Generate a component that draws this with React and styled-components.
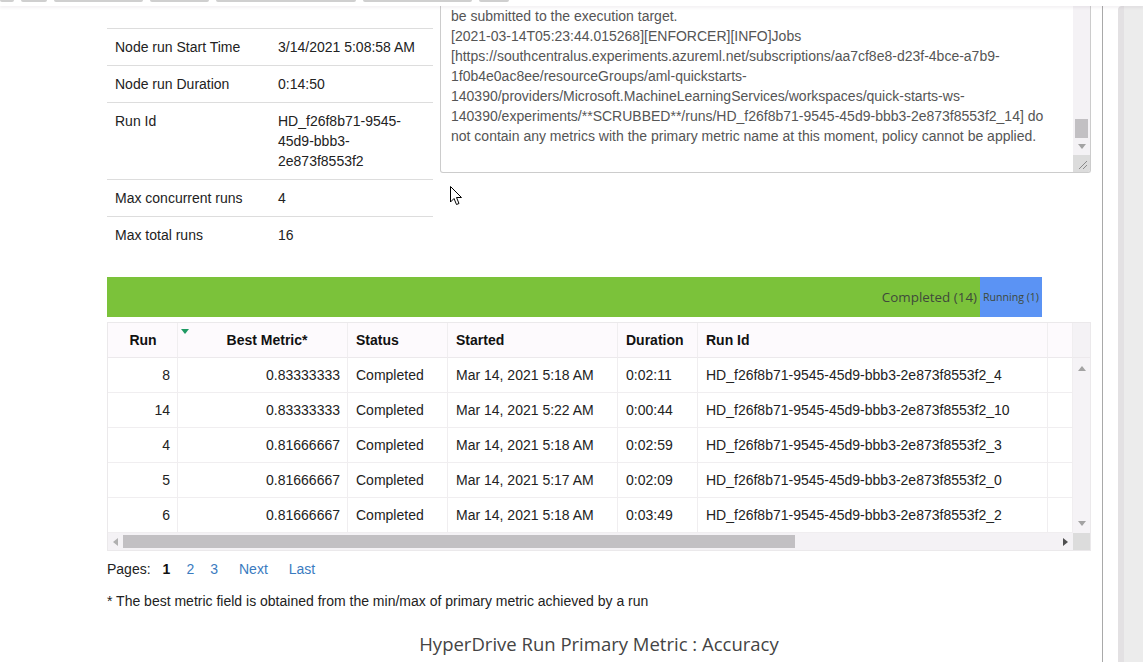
import React from 'react'
import styled, { createGlobalStyle } from 'styled-components'

const GlobalStyle = createGlobalStyle`
  html, body {
    margin: 0;
    padding: 0;
    background: #ffffff;
    overflow: hidden;
  }
  body {
    font-family: "Liberation Sans", Arial, sans-serif;
    font-size: 14px;
    color: #222222;
  }
`

const details = [
  { label: 'Node run Start Time', value: '3/14/2021 5:08:58 AM' },
  { label: 'Node run Duration', value: '0:14:50' },
  { label: 'Run Id', value: ['HD_f26f8b71-9545-', '45d9-bbb3-', '2e873f8553f2'] },
  { label: 'Max concurrent runs', value: '4' },
  { label: 'Max total runs', value: '16' },
]

const logLines = [
  'be submitted to the execution target.',
  '[2021-03-14T05:23:44.015268][ENFORCER][INFO]Jobs',
  '[https://southcentralus.experiments.azureml.net/subscriptions/aa7cf8e8-d23f-4bce-a7b9-',
  '1f0b4e0ac8ee/resourceGroups/aml-quickstarts-',
  '140390/providers/Microsoft.MachineLearningServices/workspaces/quick-starts-ws-',
  '140390/experiments/**SCRUBBED**/runs/HD_f26f8b71-9545-45d9-bbb3-2e873f8553f2_14] do',
  'not contain any metrics with the primary metric name at this moment, policy cannot be applied.',
]

const runs = [
  ['8', '0.83333333', 'Completed', 'Mar 14, 2021 5:18 AM', '0:02:11', 'HD_f26f8b71-9545-45d9-bbb3-2e873f8553f2_4'],
  ['14', '0.83333333', 'Completed', 'Mar 14, 2021 5:22 AM', '0:00:44', 'HD_f26f8b71-9545-45d9-bbb3-2e873f8553f2_10'],
  ['4', '0.81666667', 'Completed', 'Mar 14, 2021 5:18 AM', '0:02:59', 'HD_f26f8b71-9545-45d9-bbb3-2e873f8553f2_3'],
  ['5', '0.81666667', 'Completed', 'Mar 14, 2021 5:17 AM', '0:02:09', 'HD_f26f8b71-9545-45d9-bbb3-2e873f8553f2_0'],
  ['6', '0.81666667', 'Completed', 'Mar 14, 2021 5:18 AM', '0:03:49', 'HD_f26f8b71-9545-45d9-bbb3-2e873f8553f2_2'],
]

const tabWidths = [14, 26, 89, 59, 140, 109, 30]

function Arrow({ dir, color = '#a3a3a3' }) {
  const points = {
    up: '0,5 4,0 8,5',
    down: '0,0 8,0 4,5',
    left: '5,0 5,8 0,4',
    right: '0,0 0,8 5,4',
  }[dir]
  const vertical = dir === 'up' || dir === 'down'
  return (
    <svg width={vertical ? 8 : 5} height={vertical ? 5 : 8}>
      <polygon points={points} fill={color} />
    </svg>
  )
}

export default function App() {
  return (
    <Page>
      <GlobalStyle />
      <TopBar>
        {tabWidths.map((w, i) => (
          <TabStub key={i} style={{ width: w }} />
        ))}
      </TopBar>
      <Frame>
        <Main>
          <TopSection>
            <DetailsTable>
              {details.map((d) => (
                <DetailRow key={d.label}>
                  <DetailLabel>{d.label}</DetailLabel>
                  <DetailValue>
                    {Array.isArray(d.value)
                      ? d.value.map((v) => <div key={v}>{v}</div>)
                      : d.value}
                  </DetailValue>
                </DetailRow>
              ))}
            </DetailsTable>
            <LogBox>
              <LogText>
                {logLines.map((l, i) => (
                  <LogLine key={i}>{l}</LogLine>
                ))}
              </LogText>
              <LogScroll>
                <ScrollTrack>
                  <LogThumb />
                  <ArrowSlot>
                    <Arrow dir="down" />
                  </ArrowSlot>
                </ScrollTrack>
                <ResizeCorner>
                  <svg width="10" height="10">
                    <line x1="1" y1="9" x2="9" y2="1" stroke="#8a8a8a" />
                    <line x1="5" y1="9" x2="9" y2="5" stroke="#8a8a8a" />
                  </svg>
                </ResizeCorner>
              </LogScroll>
            </LogBox>
          </TopSection>

          <StatusBar>
            <StatusSegment $color="#7bc23a" $grow>
              <StatusLabel $size={13.4}>Completed (14)</StatusLabel>
            </StatusSegment>
            <StatusSegment $color="#5b93f4" $width={62}>
              <StatusLabel $size={10.6}>Running (1)</StatusLabel>
            </StatusSegment>
          </StatusBar>

          <DataTable>
            <TableUpper>
              <Grid>
                <HeadCell $align="center">Run</HeadCell>
                <HeadCell $align="center" $sorted>
                  <SortMark>
                    <Arrow dir="down" color="#1f9a63" />
                  </SortMark>
                  Best Metric*
                </HeadCell>
                <HeadCell>Status</HeadCell>
                <HeadCell>Started</HeadCell>
                <HeadCell>Duration</HeadCell>
                <HeadCell>Run Id</HeadCell>
                <HeadCell />
                {runs.map((r) => (
                  <React.Fragment key={r[5]}>
                    <Cell $align="right">{r[0]}</Cell>
                    <Cell $align="right">{r[1]}</Cell>
                    <Cell>{r[2]}</Cell>
                    <Cell>{r[3]}</Cell>
                    <Cell>{r[4]}</Cell>
                    <Cell>{r[5]}</Cell>
                    <Cell />
                  </React.Fragment>
                ))}
              </Grid>
              <TableVScroll>
                <VScrollHead />
                <VScrollBody>
                  <Arrow dir="up" />
                  <Arrow dir="down" />
                </VScrollBody>
              </TableVScroll>
            </TableUpper>
            <HScroll>
              <HTrack>
                <ArrowSlotH>
                  <Arrow dir="left" color="#b0b0b0" />
                </ArrowSlotH>
                <HThumb />
                <Spacer />
                <ArrowSlotH>
                  <Arrow dir="right" color="#505050" />
                </ArrowSlotH>
              </HTrack>
              <Corner />
            </HScroll>
          </DataTable>

          <Pager>
            <span>Pages:</span>
            <PageItem $current>1</PageItem>
            <PageItem>2</PageItem>
            <PageItem>3</PageItem>
            <PageItem $wide>Next</PageItem>
            <PageItem $wide>Last</PageItem>
          </Pager>

          <Footnote>
            * The best metric field is obtained from the min/max of primary metric achieved by a run
          </Footnote>

          <ChartTitle>HyperDrive Run Primary Metric : Accuracy</ChartTitle>
        </Main>
        <Divider />
        <Gap />
        <Gutter />
      </Frame>

      <Cursor width="13" height="20" viewBox="0 0 13 20">
        <path
          d="M0.5 0.5 L0.5 16 L4 12.5 L6.5 18.5 L9 17.5 L6.5 11.5 L11.5 11.5 Z"
          fill="#ffffff"
          stroke="#000000"
          strokeWidth="1"
          strokeLinejoin="round"
        />
      </Cursor>
    </Page>
  )
}

const Page = styled.div`
  position: relative;
  width: 1143px;
  height: 662px;
  display: flex;
  flex-direction: column;
  overflow: hidden;
`

const TopBar = styled.div`
  height: 6px;
  flex-shrink: 0;
  display: flex;
  gap: 7px;
  align-items: flex-start;
  background: #ffffff;
  box-shadow: 0 2px 3px rgba(80, 60, 80, 0.07);
  position: relative;
  z-index: 2;
`

const TabStub = styled.div`
  height: 2px;
  background: #cfcfcf;
  border-radius: 0 0 2px 2px;
`

const Frame = styled.div`
  flex: 1;
  display: flex;
  min-height: 0;
`

const Main = styled.div`
  width: 984px;
  padding: 0 11px 0 107px;
  display: flex;
  flex-direction: column;
  overflow: hidden;
`

const TopSection = styled.div`
  display: grid;
  grid-template-columns: 326px 651px;
  column-gap: 7px;
  align-items: start;
`

const DetailsTable = styled.div`
  margin-top: 22px;
  display: flex;
  flex-direction: column;
`

const DetailRow = styled.div`
  display: grid;
  grid-template-columns: 163px 1fr;
  border-top: 1px solid #dddddd;
  padding: 8px 8px;
  line-height: 20px;
  color: #222222;
`

const DetailLabel = styled.div``

const DetailValue = styled.div``

const LogBox = styled.div`
  height: 166px;
  border: 1px solid #cccccc;
  border-top: none;
  border-radius: 0 0 3px 3px;
  display: flex;
  overflow: hidden;
`

const LogText = styled.div`
  flex: 1;
  padding: 0 10px;
  color: #555555;
  line-height: 20px;
  overflow: hidden;
`

const LogLine = styled.div`
  white-space: nowrap;
`

const LogScroll = styled.div`
  width: 17px;
  display: flex;
  flex-direction: column;
`

const ScrollTrack = styled.div`
  flex: 1;
  background: #f4f2f5;
  display: flex;
  flex-direction: column;
  align-items: center;
  justify-content: flex-end;
`

const LogThumb = styled.div`
  width: 13px;
  height: 19px;
  background: #c2c0c3;
`

const ArrowSlot = styled.div`
  height: 17px;
  display: flex;
  align-items: center;
  justify-content: center;
`

const ResizeCorner = styled.div`
  height: 17px;
  background: #dcdcdc;
  display: flex;
  align-items: flex-end;
  justify-content: flex-end;
  padding: 0 2px 2px 0;
  box-sizing: border-box;
`

const StatusBar = styled.div`
  margin-top: 24px;
  width: 935px;
  height: 40px;
  display: flex;
  flex-shrink: 0;
`

const StatusSegment = styled.div`
  background: ${(p) => p.$color};
  flex: ${(p) => (p.$grow ? '1 1 auto' : '0 0 auto')};
  width: ${(p) => (p.$width ? `${p.$width}px` : 'auto')};
  box-sizing: border-box;
  display: flex;
  align-items: center;
  justify-content: flex-end;
  padding-right: 3px;
  overflow: hidden;
`

const StatusLabel = styled.span`
  font-family: "Open Sans", "DejaVu Sans", sans-serif;
  font-size: ${(p) => p.$size}px;
  color: #3f4a3a;
  white-space: nowrap;
`

const DataTable = styled.div`
  margin-top: 5px;
  width: 982px;
  border: 1px solid #ebe9eb;
  display: flex;
  flex-direction: column;
  flex-shrink: 0;
`

const TableUpper = styled.div`
  display: flex;
`

const Grid = styled.div`
  flex: 1;
  display: grid;
  grid-template-columns: 70px 170px 100px 170px 80px 350px 1fr;
  grid-auto-rows: 35px;
`

const Cell = styled.div`
  position: relative;
  display: flex;
  align-items: center;
  justify-content: ${(p) =>
    p.$align === 'right' ? 'flex-end' : p.$align === 'center' ? 'center' : 'flex-start'};
  padding: 0 7px 0 8px;
  border-right: 1px solid #f0eef0;
  border-bottom: 1px solid #f0eef0;
  white-space: nowrap;
  color: #222222;
  background: #ffffff;
`

const HeadCell = styled(Cell)`
  background: #fdfafd;
  font-weight: bold;
  color: #111111;
  border-bottom-color: #ece9ec;
  padding-left: ${(p) => (p.$sorted ? '16px' : '8px')};
`

const SortMark = styled.span`
  position: absolute;
  left: 3px;
  top: 6px;
  display: flex;
`

const TableVScroll = styled.div`
  width: 17px;
  display: flex;
  flex-direction: column;
  background: #f5f3f6;
`

const VScrollHead = styled.div`
  height: 34px;
  background: #f4f2f5;
  border-bottom: 1px solid #ece9ec;
`

const VScrollBody = styled.div`
  flex: 1;
  display: flex;
  flex-direction: column;
  align-items: center;
  justify-content: space-between;
  padding: 8px 0 7px;
`

const HScroll = styled.div`
  height: 17px;
  display: flex;
`

const HTrack = styled.div`
  flex: 1;
  background: #f4f2f5;
  display: flex;
  align-items: center;
`

const ArrowSlotH = styled.div`
  width: 15px;
  display: flex;
  justify-content: center;
`

const HThumb = styled.div`
  width: 672px;
  height: 13px;
  background: #c2c0c3;
`

const Spacer = styled.div`
  flex: 1;
`

const Corner = styled.div`
  width: 17px;
  background: #dcdcdc;
`

const Pager = styled.div`
  margin-top: 8px;
  line-height: 20px;
  display: flex;
  color: #222222;
  span:first-child {
    margin-right: 4px;
  }
`

const PageItem = styled.span`
  padding: 0 8px;
  margin-left: ${(p) => (p.$wide ? '5px' : '0')};
  color: ${(p) => (p.$current ? '#111111' : '#3a7bbf')};
  font-weight: ${(p) => (p.$current ? 'bold' : 'normal')};
`

const Footnote = styled.div`
  margin-top: 12px;
  line-height: 20px;
  color: #222222;
`

const ChartTitle = styled.div`
  margin-top: 21px;
  width: 984px;
  text-align: center;
  font-family: "Open Sans", "DejaVu Sans", sans-serif;
  font-size: 18.5px;
  line-height: 24px;
  color: #444444;
`

const Divider = styled.div`
  width: 1px;
  background: #a9a9a9;
`

const Gap = styled.div`
  width: 15px;
`

const Gutter = styled.div`
  flex: 1;
  background: #ececec;
  border-left: 6px solid #e3e1e3;
  border-top-left-radius: 4px;
`

const Cursor = styled.svg`
  position: absolute;
  left: 450px;
  top: 186px;
`
